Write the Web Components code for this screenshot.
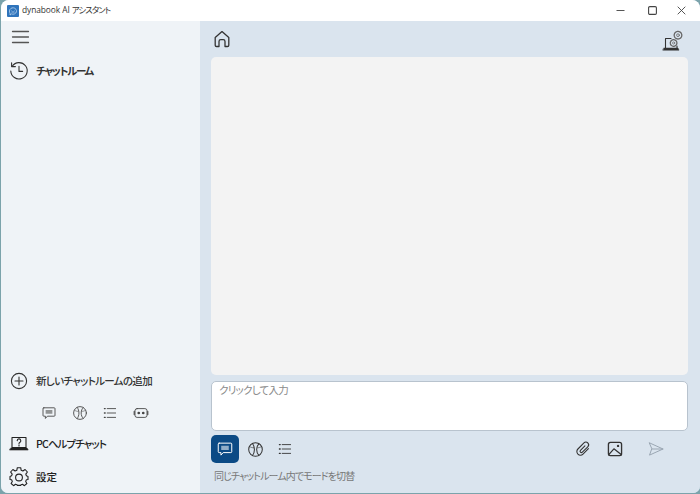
<!DOCTYPE html>
<html lang="ja"><head><meta charset="utf-8">
<style>
html,body{margin:0;padding:0;width:700px;height:494px;overflow:hidden;background:#7ba3ab;font-family:"Noto Sans","Noto Sans CJK JP",sans-serif}
</style></head><body>
<app-window>
  <title-bar slot="title"></title-bar>
  <side-bar slot="side"></side-bar>
  <main-pane slot="main"></main-pane>
</app-window>
<script>
const P={
 menu:'<path d="M0 1.5H16M0 7H16M0 12.5H16" stroke-width="1.3"/>',
 history:'<path d="M3.2 5.2A8.2 8.2 0 1 1 1.8 10"/><path d="M2.6 1.8V5.6H6.4"/><path d="M10 5.4V10.4H13.6"/>',
 plus:'<circle cx="10" cy="10" r="7.6"/><path d="M10 6V14M6 10H14"/>',
 chat:'<path d="M3.5 3.5H16.5A1 1 0 0 1 17.5 4.5V13A1 1 0 0 1 16.5 14H8L5.5 16.8V14H3.5A1 1 0 0 1 2.5 13V4.5A1 1 0 0 1 3.5 3.5Z"/><path d="M5.8 6.3H14.2V11H5.8Z" fill="currentColor" fill-opacity=".55" stroke="none"/>',
 ball:'<circle cx="10" cy="10" r="8"/><path d="M6.5 3C9.5 7 9.5 13 6.5 17M14 3C10.5 7 10.5 13 14 17"/><path d="M3 6.5C4.5 7.5 6 8 8 8M17 6.5C15.5 7.5 14 8 12 8" stroke-width=".7"/>',
 list:'<path d="M6.5 4.5H17M6.5 10H17M6.5 15.5H17"/><path d="M3 4.5H4M3 10H4M3 15.5H4" stroke-width="1.6"/>',
 bot:'<path d="M1.5 8V12M18.5 8V12" stroke-width="1.4"/><rect x="2.5" y="4.5" width="15" height="11" rx="2.6"/><circle cx="7.2" cy="10" r="1.7" fill="currentColor" stroke="none"/><circle cx="12.8" cy="10" r="1.7" fill="currentColor" stroke="none"/>',
 pc:'<path d="M3 3.5H17V13.5H3Z"/><path d="M.8 16H19.2L18 14H2Z" fill="currentColor" stroke-width=".6"/><path d="M8.2 6.6A1.8 1.8 0 1 1 10.6 8.4C10 8.7 10 9.2 10 9.8" stroke-width="1.1"/><path d="M10 11V12" stroke-width="1.1"/>',
 gear:'<path d="M8.3 1.6H11.7L12.2 4.2 13.9 4.9 16.1 3.4 18.4 5.9 16.8 8 17.4 9.7 19 10.3V13.4L17.4 13.6 16.7 15.3 17.9 17.4 15.4 19.6 13.5 18.1 12 18.7 11.7 19.3H8.3L8 18.7 6.5 18.1 4.6 19.6 2.1 17.4 3.3 15.3 2.6 13.6 1 13.4V10.3L2.6 9.7 3.2 8 1.6 5.9 3.9 3.4 6.1 4.9 7.8 4.2Z" transform="translate(0 -.9)"/><circle cx="10" cy="10.5" r="3.4"/>',
 home:'<path d="M3.2 8.6 10 2.6 16.8 8.6V16.2A1.3 1.3 0 0 1 15.5 17.5H13V12.5A1.8 1.8 0 0 0 11.2 10.7H8.8A1.8 1.8 0 0 0 7 12.5V17.5H4.5A1.3 1.3 0 0 1 3.2 16.2Z"/>',
 clip:'<path transform="rotate(45 10 10)" d="M14 5.5V14A4 4 0 0 1 6 14V4.5A3 3 0 0 1 12 4.5V13A1.5 1.5 0 0 1 9 13V6"/>',
 image:'<rect x="2.7" y="2.7" width="14.6" height="14.6" rx="2.2" stroke-width="1.5"/><path d="M2.8 16.5 8.8 9.8 17.2 16.5" stroke-width="1.4"/><circle cx="13.4" cy="6.6" r="1.3" fill="currentColor" stroke="none"/>',
 send:'<path d="M2.8 3.2 17.8 10 2.8 16.8 5.2 10ZM5.2 10H17.8"/>',
 pcgear:'<path d="M3.5 7.5H9M3.5 7.5V17M15 15V17"/><path d="M1 19.2H17L16 17H2Z" fill="currentColor" stroke-width=".5"/><circle cx="11.6" cy="12" r="3.3" stroke="#666" stroke-width="1.3" stroke-dasharray="1.5 .5"/><circle cx="11.6" cy="12" r="1.1" stroke="#666" stroke-width=".7"/><circle cx="16" cy="4.2" r="3.8" stroke="#666" stroke-width="1.3" stroke-dasharray="1.6 .6"/><circle cx="16" cy="4.2" r="1.4" stroke="#666" stroke-width=".8"/>'
};
class Base extends HTMLElement{
  constructor(){super();this.attachShadow({mode:'open'});}
}
class UiIcon extends Base{
  connectedCallback(){
    const s=+this.getAttribute('size')||20,n=this.getAttribute('name'),sw=this.getAttribute('sw')||1.3;
    const vb=n==='menu'?'0 0 16 14':'0 0 20 20';
    const h=n==='menu'?14:s;
    this.shadowRoot.innerHTML=`<style>:host{display:block;width:${s}px;height:${h}px;flex:none;line-height:0}svg{display:block;overflow:visible}</style><svg width="${s}" height="${h}" viewBox="${vb}" fill="none" stroke="currentColor" stroke-width="${sw}" stroke-linecap="round" stroke-linejoin="round">${P[n]}</svg>`;
  }
}
class AppWindow extends Base{
  connectedCallback(){
    this.shadowRoot.innerHTML=`<style>
    :host{display:flex;flex-direction:column;width:699px;height:493px;box-sizing:border-box;margin-left:1px;border-radius:8px 8px 7px 7px;overflow:hidden;background:#dae4ee}
    .body{flex:1;display:flex;min-height:0}
    </style><slot name="title"></slot><div class="body"><slot name="side"></slot><slot name="main"></slot></div>`;
  }
}
class TitleBar extends Base{
  connectedCallback(){
    this.shadowRoot.innerHTML=`<style>
    :host{display:flex;align-items:center;height:21px;background:#fff;flex:none;padding:0 14px 0 6px;color:#333;font:8.4px/1 "Open Sans","Noto Sans CJK JP",sans-serif;font-feature-settings:"palt";letter-spacing:-.08px}
    .logo{width:12px;height:12px;background:#2f74bb;border-radius:1px;display:flex;align-items:center;justify-content:center;margin-right:3px}
    .t{flex:1}
    .k{letter-spacing:-.9px}
    .b{width:10px;display:flex;justify-content:center;align-items:center;height:21px}
    svg{display:block}
    </style>
    <div class="logo"><svg width="10" height="10" viewBox="0 0 10 10" fill="none" stroke="#bcd6ef" stroke-width=".8"><path d="M1.5 5a3.5 3.2 0 1 1 2 2.9L2 9V7.2A3 3 0 0 1 1.5 5Z"/><path d="M3.5 4.6h.4M6 4.6h.4M3.5 6h3"/></svg></div>
    <span class="t">dynabook AI <span class="k">アシスタント</span></span>
    <span class="b"><svg width="9" height="9" viewBox="0 0 9 9" stroke="#555" stroke-width="1.1"><path d="M.5 4.5H8.5"/></svg></span>
    <span class="b" style="margin-left:22px"><svg width="9" height="9" viewBox="0 0 9 9" fill="none" stroke="#444" stroke-width="1.1"><rect x=".6" y=".6" width="7.8" height="7.8" rx="1.2"/></svg></span>
    <span class="b" style="margin-left:19px"><svg width="9" height="9" viewBox="0 0 9 9" stroke="#444" stroke-width=".9"><path d="M.7.7 8.3 8.3M8.3.7.7 8.3"/></svg></span>`;
  }
}
class NavItem extends Base{
  connectedCallback(){
    const i=this.getAttribute('icon'),sz=this.getAttribute('size')||20;
    this.shadowRoot.innerHTML=`<style>
    :host{display:flex;align-items:center;gap:7px;padding-left:8px;height:20px;color:#222;font:500 10.5px/1 "Noto Sans CJK JP",sans-serif;font-feature-settings:"palt"}
    :host([strong]){font-weight:700;color:#333}
    </style><ui-icon name="${i}" size="${sz}" sw="${this.getAttribute('sw')||1.1}"></ui-icon><slot></slot>`;
  }
}
class ModeRow extends Base{
  connectedCallback(){
    this.shadowRoot.innerHTML=`<style>:host{display:flex;align-items:center;color:#444}</style><slot></slot>`;
  }
}
class SideBar extends Base{
  connectedCallback(){
    this.shadowRoot.innerHTML=`<style>
    :host{display:flex;flex-direction:column;width:199px;flex:none;background:#eff3f7;padding:9px 0 6px;box-sizing:border-box;color:#444}
    .menu{padding-left:11px;color:#555;height:14px}
    .sp{flex:1}
    mode-row{padding-left:40px;gap:14.6px;margin:14px 0 13px}
    .gap{height:13px}
    </style>
    <div class="menu"><ui-icon name="menu" size="17"></ui-icon></div>
    <div style="height:17px"></div>
    <nav-item icon="history" strong style="letter-spacing:-1.3px">チャットルーム</nav-item>
    <div class="sp"></div>
    <nav-item icon="plus" style="color:#333;letter-spacing:-.65px">新しいチャットルームの追加</nav-item>
    <mode-row>
      <ui-icon name="chat" size="16" sw="1.1"></ui-icon>
      <ui-icon name="ball" size="16" sw="1.1"></ui-icon>
      <ui-icon name="list" size="16" sw="1.1"></ui-icon>
      <ui-icon name="bot" size="16" sw="1.1"></ui-icon>
    </mode-row>
    <nav-item icon="pc" style="letter-spacing:-.9px">PCヘルプチャット</nav-item>
    <div class="gap"></div>
    <nav-item icon="gear">設定</nav-item>`;
  }
}
class MainPane extends Base{
  connectedCallback(){
    this.shadowRoot.innerHTML=`<style>
    :host{flex:1;min-width:0;display:flex;flex-direction:column;background:#dae4ee;padding:0 12px 0 11px;box-sizing:border-box;color:#333;font-feature-settings:"palt"}
    .top{display:flex;justify-content:space-between;align-items:center;height:36px;color:#333;padding:0 0 0 1px}
    .log{height:318px;background:#f3f3f3;border-radius:5px;flex:none}
    .input{height:50px;margin-top:6px;background:#fff;border:1px solid #b8c3ce;border-radius:5px;box-sizing:border-box;padding:0 7px;color:#8a8a8a;font:10.5px/15px "Noto Sans CJK JP",sans-serif;font-feature-settings:"palt";letter-spacing:-.75px}
    .tools{display:flex;align-items:center;height:28px;margin-top:4px}
    .btn{width:28px;height:28px;display:flex;align-items:center;justify-content:center;border-radius:5px;margin-right:2px}
    .btn.on{background:#0b4a85;color:#fff}
    .sp{flex:1}
    .hint{font:10px/14px "Noto Sans CJK JP",sans-serif;font-feature-settings:"palt";letter-spacing:-.9px;color:#777;padding:0 3px;margin-top:6px}
    </style>
    <div class="top"><ui-icon name="home" size="20" sw="1.3"></ui-icon><ui-icon name="pcgear" size="20" sw="1.1" style="margin-right:6px;margin-top:4px"></ui-icon></div>
    <div class="log"></div>
    <div class="input">クリックして入力</div>
    <div class="tools">
      <span class="btn on"><ui-icon name="chat" size="18" sw="1.1"></ui-icon></span>
      <span class="btn"><ui-icon name="ball" size="17" sw="1.2"></ui-icon></span>
      <span class="btn"><ui-icon name="list" size="16" sw="1.1"></ui-icon></span>
      <span class="sp"></span>
      <span class="btn" style="margin-right:4px"><ui-icon name="clip" size="18" sw="1.2"></ui-icon></span>
      <span class="btn" style="margin-right:13px"><ui-icon name="image" size="18"></ui-icon></span>
      <span class="btn" style="margin-right:18px;color:#9aa6b2"><ui-icon name="send" size="18" sw="1.1"></ui-icon></span>
    </div>
    <div class="hint">同じチャットルーム内でモードを切替</div>`;
  }
}
customElements.define('ui-icon',UiIcon);
customElements.define('app-window',AppWindow);
customElements.define('title-bar',TitleBar);
customElements.define('nav-item',NavItem);
customElements.define('mode-row',ModeRow);
customElements.define('side-bar',SideBar);
customElements.define('main-pane',MainPane);
</script>
</body></html>
